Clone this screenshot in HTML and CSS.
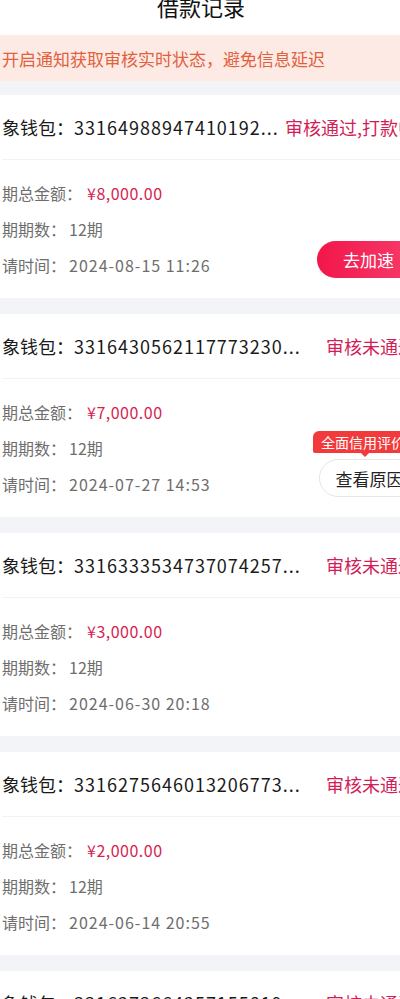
FILE: index.html
```html
<!DOCTYPE html>
<html lang="zh">
<head>
<meta charset="utf-8">
<title>借款记录</title>
<link rel="stylesheet" href="styles.css">
</head>
<body>
<div class="page">
  <header class="topbar"><h1 class="title">借款记录</h1></header>
  <div class="notice">开启通知获取审核实时状态，避免信息延迟</div>
  <div class="list">
    <section class="card">
      <div class="card-head">
        <span class="order">象钱包：<span class="num">33164988947410192...</span></span>
        <span class="status">审核通过,打款中</span>
      </div>
      <div class="card-body">
        <div class="rows">
          <div class="row">期总金额：<span class="val amount">¥8,000.00</span></div>
          <div class="row">期期数：<span class="val">12期</span></div>
          <div class="row">请时间：<span class="val date">2024-08-15 11:26</span></div>
        </div>
        <div class="action">
          <button class="btn btn-primary">去加速</button>
        </div>
      </div>
    </section>
    <section class="card">
      <div class="card-head">
        <span class="order">象钱包：<span class="num">3316430562117773230...</span></span>
        <span class="status">审核未通过</span>
      </div>
      <div class="card-body">
        <div class="rows">
          <div class="row">期总金额：<span class="val amount">¥7,000.00</span></div>
          <div class="row">期期数：<span class="val">12期</span></div>
          <div class="row">请时间：<span class="val date">2024-07-27 14:53</span></div>
        </div>
        <div class="action">
          <span class="tip">全面信用评价</span>
          <button class="btn btn-outline">查看原因</button>
        </div>
      </div>
    </section>
    <section class="card">
      <div class="card-head">
        <span class="order">象钱包：<span class="num">3316333534737074257...</span></span>
        <span class="status">审核未通过</span>
      </div>
      <div class="card-body">
        <div class="rows">
          <div class="row">期总金额：<span class="val amount">¥3,000.00</span></div>
          <div class="row">期期数：<span class="val">12期</span></div>
          <div class="row">请时间：<span class="val date">2024-06-30 20:18</span></div>
        </div>
      </div>
    </section>
    <section class="card">
      <div class="card-head">
        <span class="order">象钱包：<span class="num">3316275646013206773...</span></span>
        <span class="status">审核未通过</span>
      </div>
      <div class="card-body">
        <div class="rows">
          <div class="row">期总金额：<span class="val amount">¥2,000.00</span></div>
          <div class="row">期期数：<span class="val">12期</span></div>
          <div class="row">请时间：<span class="val date">2024-06-14 20:55</span></div>
        </div>
      </div>
    </section>
    <section class="card">
      <div class="card-head">
        <span class="order">象钱包：<span class="num">3316273664257155819...</span></span>
        <span class="status">审核未通过</span>
      </div>
      <div class="card-body">
        <div class="rows">
          <div class="row">期总金额：<span class="val amount">¥5,000.00</span></div>
          <div class="row">期期数：<span class="val">12期</span></div>
          <div class="row">请时间：<span class="val date">2024-06-01 10:12</span></div>
        </div>
      </div>
    </section>
  </div>
</div>
</body>
</html>
```
FILE: styles.css
```css
html, body {
  margin: 0;
  padding: 0;
  overflow: hidden;
  background: #ffffff;
}
body {
  width: 400px;
  font-family: "Noto Sans CJK SC", "Noto Sans", sans-serif;
}
.page {
  width: 400px;
  overflow: hidden;
}
.topbar {
  height: 35px;
  display: flex;
  justify-content: center;
  align-items: flex-start;
  background: #ffffff;
}
.title {
  margin: -5px 0 0 2px;
  font-size: 22px;
  line-height: 22px;
  font-weight: 400;
  color: #111111;
}
.notice {
  height: 46px;
  display: flex;
  align-items: center;
  padding-left: 2px;
  background: #fdeae5;
  color: #e2613d;
  font-size: 17px;
  white-space: nowrap;
}
.list {
  background: #f3f4f8;
  padding-top: 14px;
  display: flex;
  flex-direction: column;
  gap: 16px;
}
.card {
  background: #ffffff;
  margin-right: -18px;
  padding-left: 2px;
  padding-right: 2px;
}
.card-head {
  height: 64px;
  border-bottom: 1px solid #f3f3f5;
  display: flex;
  align-items: center;
  justify-content: space-between;
  font-size: 18px;
  white-space: nowrap;
  margin-right: 0;
}
.order {
  color: #1a1a1a;
}
.num {
  letter-spacing: 1px;
}
.status {
  color: #d21e57;
  flex-shrink: 0;
  margin-left: 4px;
}
.card-body {
  display: flex;
  justify-content: space-between;
  align-items: flex-end;
  padding: 15px 0;
}
.rows {
  display: flex;
  flex-direction: column;
}
.row {
  height: 36px;
  line-height: 36px;
  font-size: 16px;
  color: #6e6e6e;
  white-space: nowrap;
}
.val {
  margin-left: 3px;
}
.amount {
  color: #d61f52;
  margin-left: 5px;
  letter-spacing: 0.5px;
}
.date {
  letter-spacing: 1px;
}
.action {
  position: relative;
  display: flex;
  flex-direction: column;
  align-items: flex-end;
  margin-bottom: 5px;
  margin-right: -4px;
}
.btn {
  height: 37px;
  width: 103px;
  border-radius: 19px;
  font-family: "Noto Sans CJK SC", "Noto Sans", sans-serif;
  font-size: 17px;
  padding: 0;
  white-space: nowrap;
}
.btn-primary {
  border: none;
  color: #ffffff;
  background: linear-gradient(90deg, #f2164a, #f63e6c);
}
.btn-outline {
  height: 38px;
  width: 101px;
  border: 1px solid #e6e6e6;
  background: #ffffff;
  color: #222222;
}
.tip {
  position: absolute;
  left: -6px;
  top: -28px;
  height: 22px;
  line-height: 22px;
  padding: 0 8px;
  background: #f23a3d;
  color: #ffffff;
  font-size: 14px;
  border-radius: 6px 6px 6px 2px;
  white-space: nowrap;
}
.tip::after {
  content: "";
  position: absolute;
  left: 48px;
  bottom: -4px;
  width: 0;
  height: 0;
  border-left: 4px solid transparent;
  border-right: 4px solid transparent;
  border-top: 4px solid #f23a3d;
}
```
